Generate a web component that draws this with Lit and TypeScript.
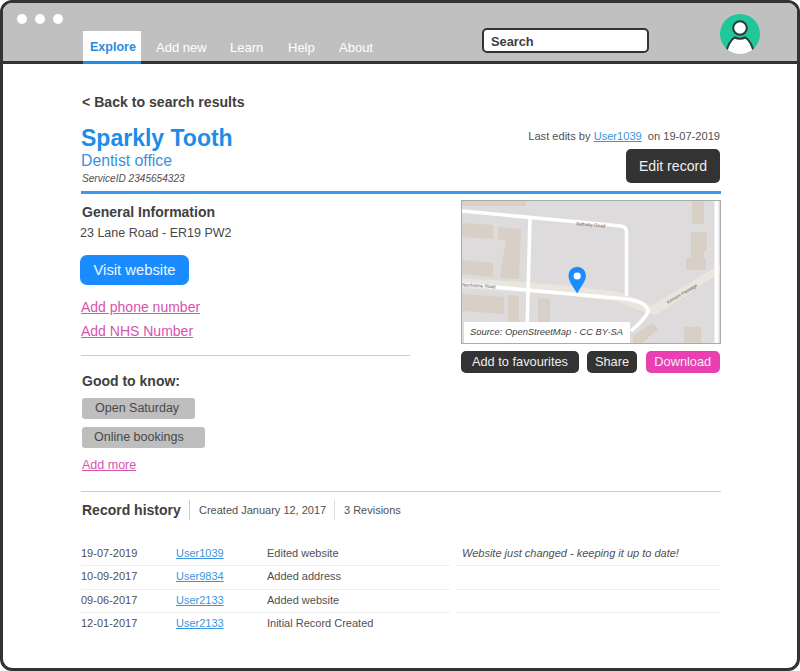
// Service record page inside a browser-style wireframe frame
import { LitElement, html, css, svg } from 'lit';
import { customElement } from 'lit/decorators.js';

const history = [
  { date: '19-07-2019', user: 'User1039', action: 'Edited website', note: 'Website just changed - keeping it up to date!' },
  { date: '10-09-2017', user: 'User9834', action: 'Added address', note: '' },
  { date: '09-06-2017', user: 'User2133', action: 'Added website', note: '' },
  { date: '12-01-2017', user: 'User2133', action: 'Initial Record Created', note: '' },
];

const buildings = [
  '461,200 525,200 525,205 461,205',
  '461,222 492,224 492,238 461,236',
  '497,226 520,228 518,278 499,277 503,250 505,240 497,238',
  '461,259 492,262 492,276 461,273',
  '461,293 503,296 503,313 461,310',
  '507,294 518,295 518,326 507,326',
  '537,297 549,298 549,323 537,323',
  '691,200 703,200 703,223 691,223',
  '690,231 706,231 706,250 703,250 703,257 690,257',
  '685,257 705,257 705,269 685,269',
  '683,326 700,326 700,343 683,343',
  '632,335 652,322 657,328 640,343 632,343',
];

@customElement('app-root')
export class AppRoot extends LitElement {
  static styles = css`
    :host {
      display: block;
      height: 671px;
      font-family: 'Liberation Sans', Arial, sans-serif;
      color: #404040;
    }

    * {
      box-sizing: border-box;
    }

    .frame {
      height: 671px;
      border: 3px solid #333;
      border-radius: 12px;
      overflow: hidden;
      background: #fff;
    }

    /* Top bar */
    .bar {
      height: 61px;
      background: #c1c0c0;
      border-bottom: 3px solid #333;
      display: flex;
      align-items: flex-start;
      padding-left: 14px;
    }

    .dots {
      display: flex;
      gap: 8px;
      margin-top: 11px;
      width: 66px;
    }

    .dots span {
      width: 10px;
      height: 10px;
      border-radius: 50%;
      background: #fff;
    }

    .tabs {
      display: flex;
      margin-top: 28px;
      height: 33px;
      width: 399px;
      font-size: 13px;
      color: #fff;
    }

    .tab {
      padding-top: 9px;
      white-space: nowrap;
    }

    .tab.active {
      width: 58px;
      padding: 9px 0 0 7px;
      background: #fff;
      border-bottom: 3px solid #1e8de8;
      color: #2a8ae0;
      font-size: 12.5px;
      font-weight: 700;
    }

    .tab.add { margin-left: 15px; width: 74px; }
    .tab.learn { width: 58px; }
    .tab.help { width: 51px; }

    .search {
      width: 167px;
      height: 25px;
      margin-top: 25px;
      padding: 4px 0 0 7px;
      background: #fff;
      border: 2px solid #333;
      border-radius: 5px;
      font-size: 12.8px;
      font-weight: 700;
    }

    .avatar {
      width: 40px;
      height: 40px;
      margin: 11px 0 0 71px;
    }

    /* Page body */
    .page {
      padding: 30px 76px 0 78px;
    }

    .back {
      padding-left: 1px;
      font-size: 14.1px;
      line-height: 17px;
      font-weight: 700;
    }

    .head {
      display: flex;
      justify-content: space-between;
      margin-top: 13px;
      height: 66px;
    }

    h1 {
      margin: 0;
      font-size: 23px;
      line-height: 28px;
      color: #1e8de8;
    }

    .kind {
      font-size: 15.8px;
      line-height: 18px;
      color: #3a8fe0;
    }

    .service {
      margin: 3px 0 0 1px;
      font-size: 10.1px;
      line-height: 12px;
      font-style: italic;
      color: #505050;
    }

    .edits {
      display: flex;
      flex-direction: column;
      align-items: flex-end;
      padding: 5px 1px 0 0;
    }

    .last {
      font-size: 11.1px;
      line-height: 14px;
      color: #505050;
    }

    .last a {
      margin-right: 3px;
    }

    a {
      color: #3a96dc;
    }

    .edit {
      margin-top: 6px;
      width: 94px;
      height: 34px;
      line-height: 34px;
      border-radius: 5px;
      background: #333;
      color: #eee;
      font-size: 14.1px;
      text-align: center;
    }

    .rule {
      height: 2.5px;
      margin-top: 1px;
      background: #3c99ea;
    }

    .cols {
      display: flex;
      justify-content: space-between;
      margin-top: 6.5px;
      height: 291px;
    }

    .left {
      width: 329px;
    }

    h2 {
      margin: 0;
      font-size: 14px;
      line-height: 17px;
      font-weight: 700;
      padding-left: 1px;
    }

    .general {
      margin-top: 4px;
    }

    .address {
      margin: 5px 0 0 -1px;
      font-size: 12.5px;
      line-height: 15px;
      color: #484848;
    }

    .visit {
      display: block;
      margin: 14px 0 0 -1px;
      width: 109px;
      height: 30px;
      line-height: 30px;
      border-radius: 7px;
      background: #1a8cff;
      color: #eef6ff;
      font-size: 14.8px;
      text-align: center;
    }

    .add-link {
      display: block;
      margin-top: 7px;
      width: fit-content;
      color: #d853ae;
      font-size: 14px;
      line-height: 17px;
    }

    .visit + .add-link {
      margin-top: 14px;
    }

    .divider {
      height: 1px;
      margin-top: 15px;
      background: #ccc;
    }

    .good {
      margin-top: 17px;
    }

    .tag {
      width: fit-content;
      height: 21px;
      line-height: 21px;
      margin: 8px 0 0 1px;
      border-radius: 3px;
      background: #bebebe;
      font-size: 12.5px;
      color: #484848;
    }

    .tag.a { padding: 0 16px 0 13px; }
    .tag.b { padding: 0 21px 0 12px; }

    .add-link.more {
      margin: 9px 0 0 1px;
      font-size: 12.5px;
      line-height: 16px;
    }

    .right {
      width: 260px;
    }

    .map {
      position: relative;
      height: 144px;
      border: 1px solid #aaa;
      overflow: hidden;
    }

    .map svg {
      display: block;
      width: 258px;
      height: 142px;
    }

    .source {
      position: absolute;
      left: 2px;
      bottom: 0;
      width: 166px;
      height: 21px;
      padding-left: 6px;
      line-height: 20px;
      background: #fff;
      font-size: 9.4px;
      font-style: italic;
      white-space: nowrap;
    }

    .actions {
      display: flex;
      margin-top: 7px;
      font-size: 12.8px;
      color: #eee;
      text-align: center;
    }

    .actions span {
      height: 22px;
      line-height: 22px;
      border-radius: 5px;
      background: #333;
    }

    .fav { width: 118px; }
    .share { width: 50px; margin-left: 8px; }
    .actions .down { width: 74.5px; margin-left: 8.5px; background: #ea3fb3; }

    .history {
      border-top: 1px solid #ccc;
      padding-top: 8px;
    }

    .summary {
      display: flex;
      align-items: center;
      height: 20px;
      font-size: 11px;
    }

    .summary h2 {
      width: 109px;
      height: 20px;
      line-height: 20px;
      padding: 0 0 0 1px;
      border-right: 1px solid #ccc;
    }

    .summary span {
      padding-left: 9px;
      color: #505050;
    }

    .summary .created {
      width: 145px;
      height: 20px;
      line-height: 20px;
      border-right: 1px solid #ddd;
    }

    .rows {
      margin-top: 23px;
      font-size: 11px;
      color: #505050;
    }

    .row {
      display: grid;
      grid-template-columns: 95px 91px 183px 6px 1fr;
      height: 23.4px;
      line-height: 21px;
    }

    .row > span {
      white-space: nowrap;
    }

    .row:not(:last-child) .line {
      border-bottom: 1px solid #eee;
    }

    .note {
      padding-left: 6px;
      font-style: italic;
    }
  `;

  // Map artwork, coordinates follow the page position of the map
  private mapArt() {
    return svg`
      <rect x="461" y="200" width="260" height="144" fill="#dddbdb"></rect>
      ${buildings.map((b) => svg`<polygon points=${b} fill="#d8cfc7"></polygon>`)}
      <path d="M461 277 L560 284 L618 291 L640 299 L650 305 L720 263 L720 271 L655 314 L640 310 L615 300 L560 294 L461 287 Z" fill="#e9e6df"></path>
      <g fill="none" stroke="#fff" stroke-width="3.6">
        <path d="M461 210 L620 225 Q625.5 226 625.5 231 L625.5 295"></path>
        <path d="M529 218 L526 330"></path>
        <path d="M461 283 L625 298 Q646 301 647 310 Q646 316 630 330"></path>
        <path d="M715.5 200 L715.5 344" stroke-width="4"></path>
      </g>
      <g fill="#555" font-size="4.6" font-family="Liberation Sans, sans-serif">
        <text x="575" y="224" transform="rotate(5 575 224)">Sotheby Road</text>
        <text x="461" y="285" transform="rotate(4 461 285)">Northolme Road</text>
        <text x="667" y="303" transform="rotate(-31 667 303)">Kilmore Passage</text>
      </g>
      <path d="M576.2 292.5 C570.5 283 567.5 280 567.5 274.5 A8.7 8.7 0 0 1 584.9 274.5 C584.9 280 581.5 283 576.2 292.5 Z" fill="#1a8cff"></path>
      <circle cx="576.2" cy="275" r="3.6" fill="#fff"></circle>
    `;
  }

  render() {
    return html`
      <div class="frame">
        <header class="bar">
          <div class="dots"><span></span><span></span><span></span></div>
          <nav class="tabs">
            <div class="tab active">Explore</div>
            <div class="tab add">Add new</div>
            <div class="tab learn">Learn</div>
            <div class="tab help">Help</div>
            <div class="tab">About</div>
          </nav>
          <div class="search">Search</div>
          <svg class="avatar" viewBox="0 0 40 40">
            <defs><clipPath id="disc"><circle cx="20" cy="20" r="20"></circle></clipPath></defs>
            <circle cx="20" cy="20" r="20" fill="#1fc79b"></circle>
            <g clip-path="url(#disc)" stroke="#2b3a3a" stroke-width="2" fill="#fff">
              <path d="M6.5 37 C8 31 10.5 26.5 14.5 23.5 Q20 26 25.5 23.5 C29.5 26.5 32 31 33.5 37 L33.5 44 L6.5 44 Z"></path>
              <circle cx="20" cy="14" r="6.8"></circle>
            </g>
          </svg>
        </header>

        <main class="page">
          <div class="back">&lt; Back to search results</div>

          <section class="head">
            <div>
              <h1>Sparkly Tooth</h1>
              <div class="kind">Dentist office</div>
              <div class="service">ServiceID 2345654323</div>
            </div>
            <div class="edits">
              <div class="last">Last edits by <a href="#">User1039</a> on 19-07-2019</div>
              <div class="edit">Edit record</div>
            </div>
          </section>
          <div class="rule"></div>

          <section class="cols">
            <div class="left">
              <h2 class="general">General Information</h2>
              <div class="address">23 Lane Road - ER19 PW2</div>
              <a class="visit">Visit website</a>
              <a class="add-link" href="#">Add phone number</a>
              <a class="add-link" href="#">Add NHS Number</a>
              <div class="divider"></div>
              <h2 class="good">Good to know:</h2>
              <div class="tag a">Open Saturday</div>
              <div class="tag b">Online bookings</div>
              <a class="add-link more" href="#">Add more</a>
            </div>
            <div class="right">
              <div class="map">
                <svg viewBox="461 200 258 142">${this.mapArt()}</svg>
                <div class="source">Source: OpenStreetMap - CC BY-SA</div>
              </div>
              <div class="actions">
                <span class="fav">Add to favourites</span>
                <span class="share">Share</span>
                <span class="down">Download</span>
              </div>
            </div>
          </section>

          <section class="history">
            <div class="summary">
              <h2>Record history</h2>
              <span class="created">Created January 12, 2017</span>
              <span>3 Revisions</span>
            </div>
            <div class="rows">
              ${history.map(
                (h) => html`
                  <div class="row">
                    <span class="line">${h.date}</span>
                    <span class="line"><a href="#">${h.user}</a></span>
                    <span class="line">${h.action}</span>
                    <span></span>
                    <span class="line note">${h.note}</span>
                  </div>
                `,
              )}
            </div>
          </section>
        </main>
      </div>
    `;
  }
}
